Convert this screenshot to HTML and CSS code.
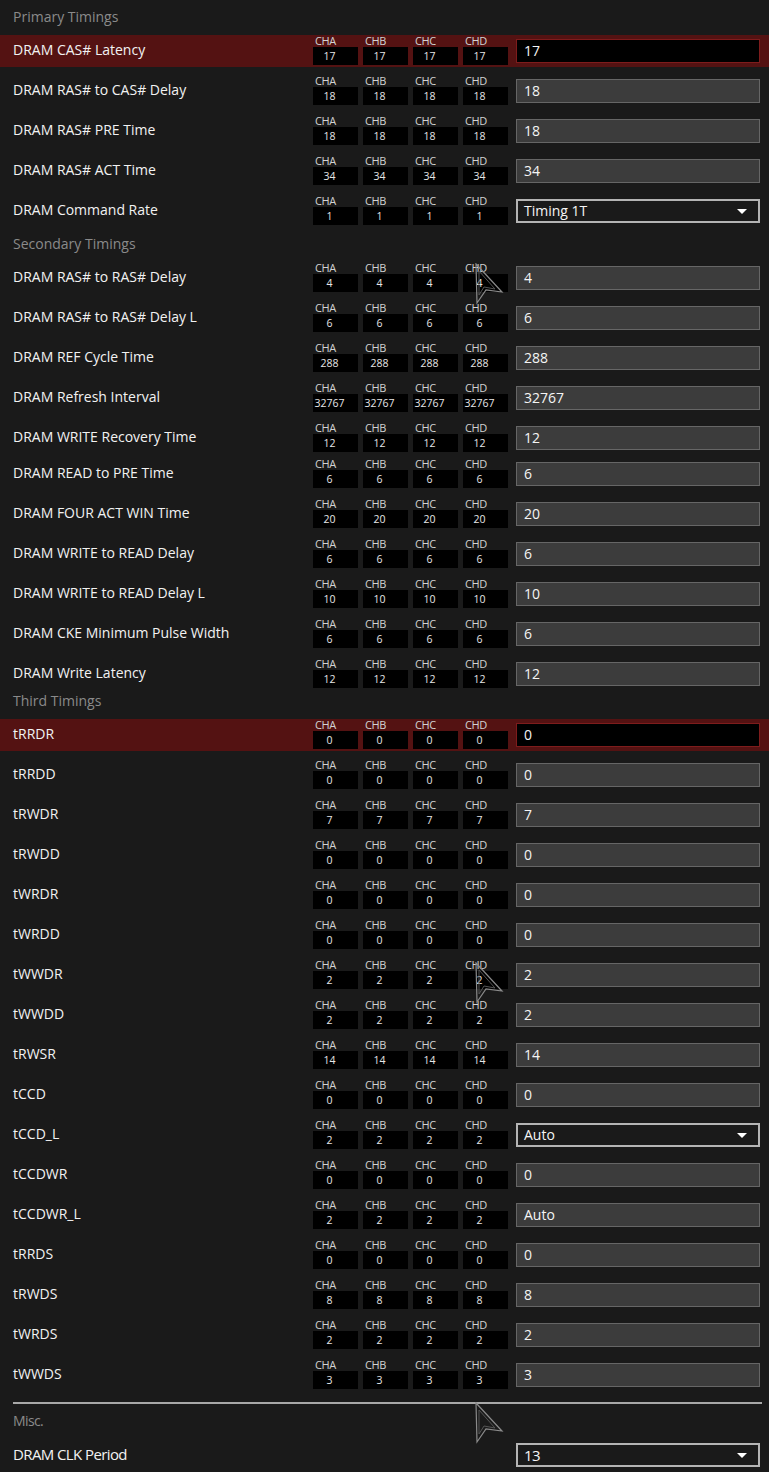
FILE: index.html
```html
<!DOCTYPE html>
<html lang="en">
<head>
    <meta charset="UTF-8" />
    <title>DRAM Timing Control</title>
    <link rel="stylesheet" href="styles.css">
</head>
<body>

    <div id="timingPanel" class="panel">
        <!-- rows are filled in by the script below -->

        <!-- mouse pointer trails left on screen -->
        <svg class="pointer" style="left: 474px; top: 263px;" width="30" height="42" viewBox="0 0 30 42">
            <polygon points="2,1 28,29 12,27 3,40" fill="none" stroke="#8a8a8a" stroke-width="1.2"/>
            <polygon points="5,8 21,26 10,24 5,32" fill="none" stroke="#555" stroke-width="1"/>
        </svg>
        <svg class="pointer" style="left: 474px; top: 962px;" width="30" height="42" viewBox="0 0 30 42">
            <polygon points="2,1 28,29 12,27 3,40" fill="none" stroke="#8a8a8a" stroke-width="1.2"/>
            <polygon points="5,8 21,26 10,24 5,32" fill="none" stroke="#555" stroke-width="1"/>
        </svg>
        <svg class="pointer" style="left: 474px; top: 1402px;" width="30" height="42" viewBox="0 0 30 42">
            <polygon points="2,1 28,29 12,27 3,40" fill="none" stroke="#8a8a8a" stroke-width="1.2"/>
            <polygon points="5,8 21,26 10,24 5,32" fill="none" stroke="#555" stroke-width="1"/>
        </svg>
    </div>

    <script>
        // [label, value, type, shown] - type: "active", "select", "tight" or empty
        const sections = [
            { title: "Primary Timings", rows: [
                ["DRAM CAS# Latency", "17", "active"],
                ["DRAM RAS# to CAS# Delay", "18"],
                ["DRAM RAS# PRE Time", "18"],
                ["DRAM RAS# ACT Time", "34"],
                ["DRAM Command Rate", "1", "select", "Timing 1T"]
            ]},
            { title: "Secondary Timings", rows: [
                ["DRAM RAS# to RAS# Delay", "4"],
                ["DRAM RAS# to RAS# Delay L", "6"],
                ["DRAM REF Cycle Time", "288"],
                ["DRAM Refresh Interval", "32767"],
                ["DRAM WRITE Recovery Time", "12"],
                ["DRAM READ to PRE Time", "6", "tight"],
                ["DRAM FOUR ACT WIN Time", "20"],
                ["DRAM WRITE to READ Delay", "6"],
                ["DRAM WRITE to READ Delay L", "10"],
                ["DRAM CKE Minimum Pulse Width", "6"],
                ["DRAM Write Latency", "12"]
            ]},
            { title: "Third Timings", short: true, rows: [
                ["tRRDR", "0", "active"],
                ["tRRDD", "0"],
                ["tRWDR", "7"],
                ["tRWDD", "0"],
                ["tWRDR", "0"],
                ["tWRDD", "0"],
                ["tWWDR", "2"],
                ["tWWDD", "2"],
                ["tRWSR", "14"],
                ["tCCD", "0"],
                ["tCCD_L", "2", "select", "Auto"],
                ["tCCDWR", "0"],
                ["tCCDWR_L", "2", "", "Auto"],
                ["tRRDS", "0"],
                ["tRWDS", "8"],
                ["tWRDS", "2"],
                ["tWWDS", "3"]
            ]}
        ];

        const panel = document.getElementById("timingPanel");
        const firstPointer = panel.querySelector(".pointer");

        function add(el) {
            panel.insertBefore(el, firstPointer);
        }

        function makeField(text, isSelect) {
            const field = document.createElement("div");
            field.className = isSelect ? "field select" : "field";
            field.textContent = text;
            if (isSelect) {
                const arrow = document.createElement("span");
                arrow.className = "arrow";
                field.appendChild(arrow);
            }
            return field;
        }

        sections.forEach(section => {
            const title = document.createElement("div");
            title.className = section.short ? "section-title short" : "section-title";
            title.textContent = section.title;
            add(title);

            section.rows.forEach(([label, value, type, shown]) => {
                const row = document.createElement("div");
                row.className = "row";
                if (type === "active") row.classList.add("active");
                if (type === "tight") row.classList.add("tight");

                const name = document.createElement("span");
                name.className = "row-label";
                name.textContent = label;
                row.appendChild(name);

                const channels = document.createElement("div");
                channels.className = "channels";
                ["CHA", "CHB", "CHC", "CHD"].forEach(ch => {
                    const box = document.createElement("div");
                    box.className = "channel";
                    box.innerHTML = `<span class="ch-name">${ch}</span><span class="ch-value">${value}</span>`;
                    channels.appendChild(box);
                });
                row.appendChild(channels);

                row.appendChild(makeField(shown || value, type === "select"));
                add(row);
            });
        });

        // Misc. block
        const rule = document.createElement("div");
        rule.className = "divider";
        add(rule);

        const misc = document.createElement("div");
        misc.className = "section-title misc";
        misc.textContent = "Misc.";
        add(misc);

        const clkRow = document.createElement("div");
        clkRow.className = "row";
        clkRow.innerHTML = '<span class="row-label misc">DRAM CLK Period</span>';
        const clkField = makeField("13", true);
        clkField.classList.add("misc");
        clkRow.appendChild(clkField);
        add(clkRow);
    </script>
</body>
</html>
```

FILE: styles.css
```css
* {
    margin: 0;
    padding: 0;
    box-sizing: border-box;
}

body {
    background: #1a1a1a;
    color: #f0f0f0;
    font-family: 'Open Sans', 'Noto Sans', sans-serif;
    overflow: hidden;
}

.panel {
    position: relative;
    width: 769px;
}

.section-title {
    height: 27px;
    padding: 6px 0 0 13px;
    line-height: 21px;
    font-size: 14px;
    color: #8a8a8a;
}

.section-title.short {
    height: 21px;
    padding-top: 0;
}

.row {
    display: flex;
    align-items: center;
    height: 32px;
    margin-top: 8px;
    padding-right: 9px;
}

.row.tight {
    margin-top: 4px;
}

.row.active {
    background: #541212;
}

.row-label {
    flex: 1;
    padding: 0 0 3px 13px;
    font-size: 14px;
    color: #f2f2f2;
}

.channels {
    display: flex;
    gap: 5px;
    margin-right: 8px;
    align-self: flex-start;
}

.channel {
    width: 45px;
    display: flex;
    flex-direction: column;
}

.ch-name {
    height: 12px;
    line-height: 12px;
    padding-left: 2px;
    font-size: 11px;
    letter-spacing: -0.4px;
    color: #d2d2d2;
}

.ch-value {
    height: 18px;
    line-height: 18px;
    padding-right: 12px;
    background: #000;
    text-align: center;
    font-size: 10.5px;
    color: #e6e6e6;
}

.field {
    position: relative;
    width: 244px;
    height: 24px;
    line-height: 22px;
    padding-left: 7px;
    background: #3c3c3c;
    border: 1px solid #666;
    font-size: 14px;
    color: #f5f5f5;
}

.row.active .field {
    background: #000;
    border-color: #7e1c1c;
}

.field.select {
    background: #1a1a1a;
    border: 2px solid #b4b4b4;
    line-height: 20px;
    padding-left: 6px;
}

.arrow {
    position: absolute;
    right: 11px;
    top: 8px;
    border-left: 5px solid transparent;
    border-right: 5px solid transparent;
    border-top: 5px solid #fff;
}

.divider {
    height: 2px;
    margin: 11px 7px 0 13px;
    background: #a8a8a8;
}

/* the Misc. block is drawn in a narrower face */
.misc {
    font-size: 15px;
    letter-spacing: -0.6px;
}

.section-title.misc {
    font-size: 14px;
}

.pointer {
    position: absolute;
}
```
